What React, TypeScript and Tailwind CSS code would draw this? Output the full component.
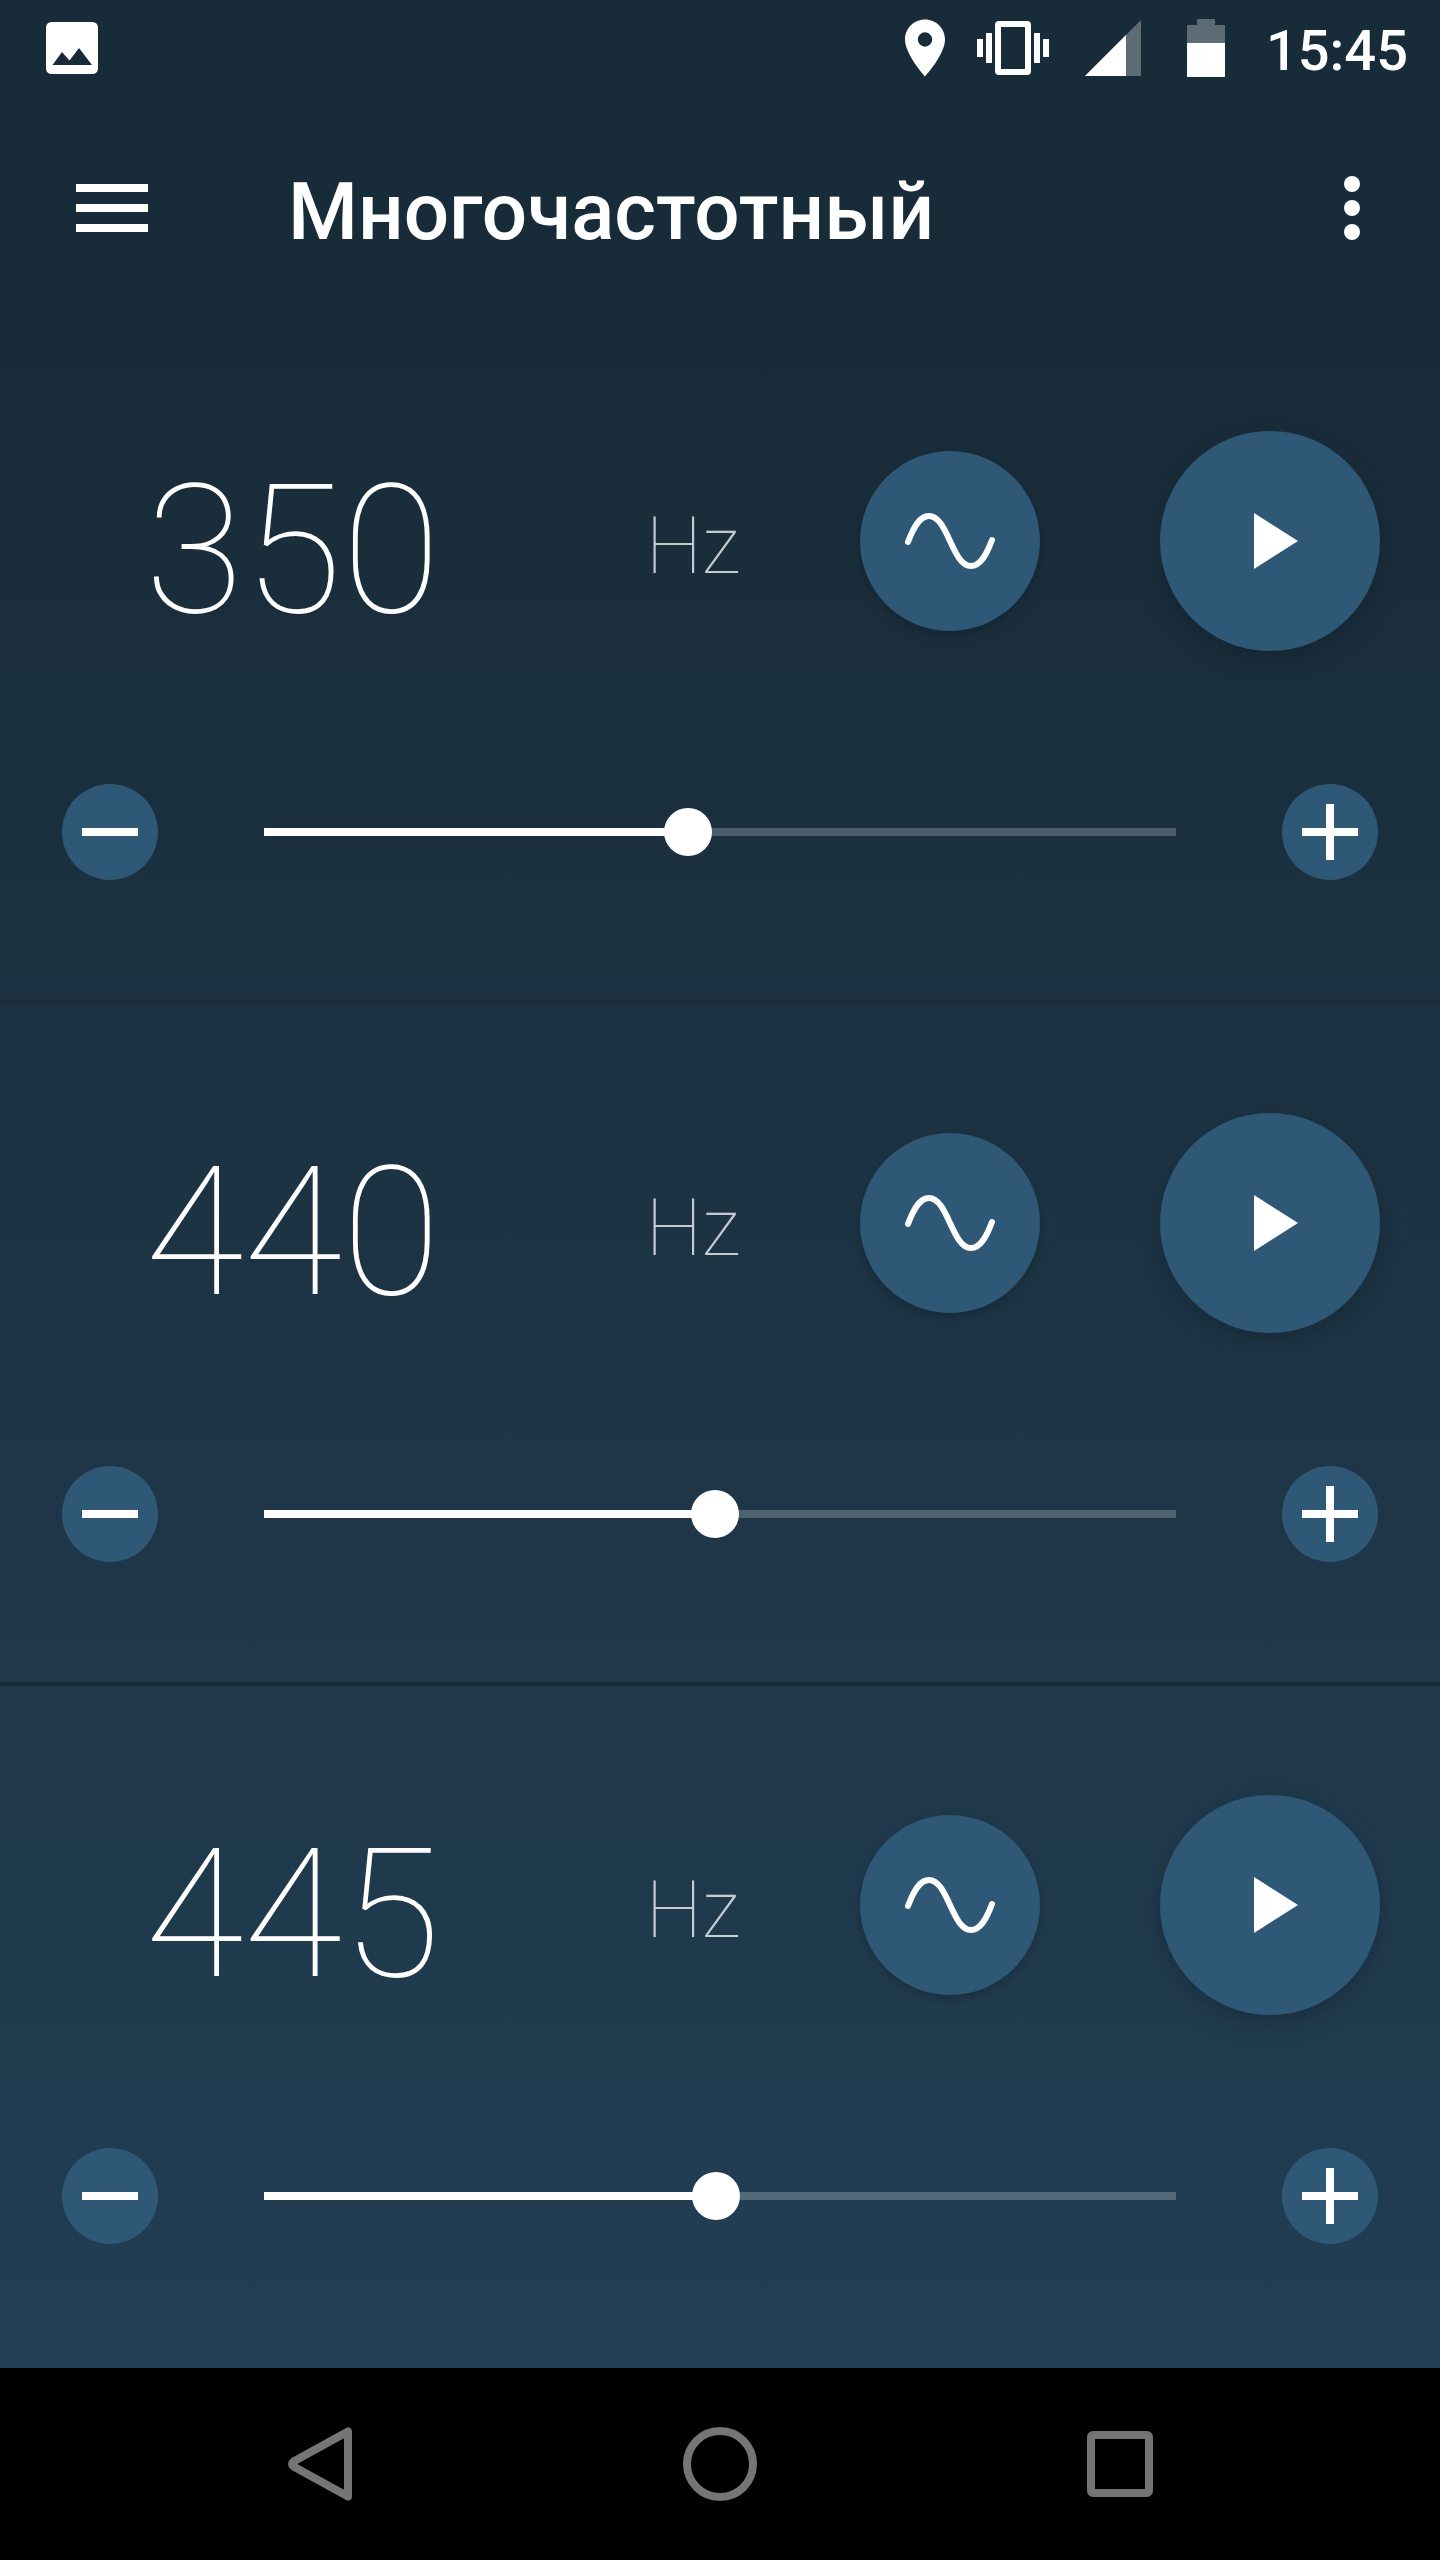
import { useState } from 'react'

interface Tone {
    id: string
    frequency: number
    position: number
}

const TONES: Tone[] = [
    { id: 'tone-1', frequency: 350, position: 463 },
    { id: 'tone-2', frequency: 440, position: 494 },
    { id: 'tone-3', frequency: 445, position: 495 },
]

const ROUND_BTN = 'flex shrink-0 items-center justify-center rounded-full bg-[#2f5877] text-white'

const StatusBar = () => (
    <div className="flex h-24 items-center pl-11 pr-8">
        <svg viewBox="0 0 56 56" className="size-14" fill="currentColor">
            <path fillRule="evenodd" d="M7.500 2h41a5.500 5.500 0 0 1 5.500 5.500v41a5.500 5.500 0 0 1-5.500 5.500h-41a5.500 5.500 0 0 1-5.500-5.500v-41a5.500 5.500 0 0 1 5.500-5.500zM8.500 45h39.500L35 28 25.500 40.500 18 32z" />
        </svg>

        <div className="ml-auto flex items-center">
            <svg viewBox="0 0 40 58" className="h-[58px] w-10" fill="currentColor">
                <path fillRule="evenodd" d="M20 .5C9 .5 0 9.300 0 20.500 0 35.500 20 57.500 20 57.500s20-22 20-37C40 9.300 31 .5 20 .5zm0 27.200a7.200 7.200 0 1 1 0-14.400 7.200 7.200 0 0 1 0 14.400z" />
            </svg>
            <svg viewBox="0 0 72 54" className="ml-8 h-[54px] w-[72px]" fill="currentColor">
                <path d="M0 18h6v18H0zM9 12h6v30H9zM57 12h6v30h-6zM66 18h6v18h-6z" />
                <path fillRule="evenodd" d="M22 0h28a4 4 0 0 1 4 4v46a4 4 0 0 1-4 4H22a4 4 0 0 1-4-4V4a4 4 0 0 1 4-4zm2 6v42h24V6z" />
            </svg>
            <svg viewBox="0 0 56 56" className="ml-9 size-14" fill="currentColor">
                <path d="M0 56 56 0v56z" opacity=".3" />
                <path d="M0 56 41 15v41z" />
            </svg>
            <svg viewBox="0 0 38 58" className="ml-[46px] h-[58px] w-[38px]" fill="currentColor">
                <path d="M10 0h18v6h10v18H0V6h10z" opacity=".3" />
                <path d="M0 24h38v34H0z" />
            </svg>
            <time className="ml-[41px] pt-1.5 text-[56px] leading-none font-medium">15:45</time>
        </div>
    </div>
)

const AppBar = () => (
    <header className="flex h-56 items-center px-16">
        <button type="button" aria-label="Меню" className="flex size-24 items-center justify-center">
            <svg viewBox="0 0 72 48" className="h-12 w-[72px]" fill="currentColor">
                <path d="M0 0h72v8H0zM0 20h72v8H0zM0 40h72v8H0z" />
            </svg>
        </button>
        <h1 className="ml-32 flex-1 pt-2 text-[80px] leading-none font-medium">Многочастотный</h1>
        <button type="button" aria-label="Ещё" className="flex h-24 w-12 items-center justify-center">
            <svg viewBox="0 0 16 64" className="h-16 w-4" fill="currentColor">
                <circle cx="8" cy="8" r="8" />
                <circle cx="8" cy="32" r="8" />
                <circle cx="8" cy="56" r="8" />
            </svg>
        </button>
    </header>
)

const ToneRow = ({ tone }: { tone: Tone }) => {
    const [position, setPosition] = useState(tone.position)
    const step = (delta: number) => setPosition(p => Math.min(1000, Math.max(0, p + delta)))
    // the fill ends under the thumb's centre, which travels 24px inside each end
    const fill = `calc(24px + (100% - 48px) * ${position / 1000})`

    return (
        <section className="flex-1 border-b-4 border-[#182b37] pt-[109px] pb-29 last:border-transparent">
            <div className="flex items-center px-15">
                <label htmlFor={tone.id} className="flex flex-1 items-center pl-[85px] font-thin">
                    <span className="flex-1 pt-5 text-[180px] leading-none">{tone.frequency}</span>
                    <span className="pt-2.5 text-[80px] leading-none text-white/75">Hz</span>
                </label>
                <button type="button" aria-label="Форма волны" className={`${ROUND_BTN} ml-30 size-45 shadow-[0_4px_12px_rgba(0,0,0,0.2)]`}>
                    <svg viewBox="0 0 90 56" className="h-14 w-[90px]" fill="none" stroke="currentColor" strokeWidth="6" strokeLinecap="round">
                        <path d="M3 29C9 13 15 3 24 3 43 3 47 53 66 53 75 53 81 43 87 27" />
                    </svg>
                </button>
                <button type="button" aria-label="Играть" className={`${ROUND_BTN} ml-30 size-55 shadow-[0_8px_24px_rgba(0,0,0,0.2)]`}>
                    <svg viewBox="0 0 56 56" className="size-14" fill="currentColor">
                        <path d="M12 0v56l44-28z" />
                    </svg>
                </button>
            </div>

            <div className="mt-[133px] flex items-center gap-[106px] px-[62px]">
                <button type="button" aria-label="Меньше" onClick={() => step(-1)} className={`${ROUND_BTN} size-24`}>
                    <svg viewBox="0 0 56 56" className="size-14" fill="currentColor">
                        <path d="M0 24h56v8H0z" />
                    </svg>
                </button>
                <input
                    id={tone.id}
                    type="range"
                    min={0}
                    max={1000}
                    value={position}
                    onChange={e => setPosition(Number(e.target.value))}
                    style={{ backgroundImage: `linear-gradient(to right, #fff ${fill}, rgba(255,255,255,0.22) ${fill})` }}
                    className="h-2 min-w-0 flex-1 cursor-pointer appearance-none bg-transparent [&::-webkit-slider-thumb]:size-12 [&::-webkit-slider-thumb]:appearance-none [&::-webkit-slider-thumb]:rounded-full [&::-webkit-slider-thumb]:bg-white"
                />
                <button type="button" aria-label="Больше" onClick={() => step(1)} className={`${ROUND_BTN} size-24`}>
                    <svg viewBox="0 0 56 56" className="size-14" fill="currentColor">
                        <path d="M24 0h8v24h24v8H32v24h-8V32H0v-8h24z" />
                    </svg>
                </button>
            </div>
        </section>
    )
}

const NavBar = () => (
    <nav className="flex h-48 items-center justify-center gap-80 bg-black text-[#757575]">
        <button type="button" aria-label="Назад" className="size-20">
            <svg viewBox="0 0 80 80" className="size-20" fill="none" stroke="currentColor" strokeWidth="8" strokeLinejoin="round">
                <path d="M68 7.500v65L13.500 42.500q-3-2.500 0-5z" />
            </svg>
        </button>
        <button type="button" aria-label="Домой" className="size-20">
            <svg viewBox="0 0 80 80" className="size-20" fill="none" stroke="currentColor" strokeWidth="8">
                <circle cx="40" cy="40" r="33" />
            </svg>
        </button>
        <button type="button" aria-label="Недавние" className="size-20">
            <svg viewBox="0 0 80 80" className="size-20" fill="currentColor">
                <path fillRule="evenodd" d="M13 7h54a6 6 0 0 1 6 6v54a6 6 0 0 1-6 6H13a6 6 0 0 1-6-6V13a6 6 0 0 1 6-6zm2 8v50h50V15z" />
            </svg>
        </button>
    </nav>
)

export default function App() {
    return (
        <div className="flex min-h-screen flex-col bg-black font-['Roboto',sans-serif] text-white">
            <div className="flex flex-1 flex-col bg-linear-to-b from-[#182b38] from-13% to-[#223e53]">
                <StatusBar />
                <AppBar />
                <main className="flex flex-1 flex-col pt-0.5">
                    {TONES.map(tone => <ToneRow key={tone.id} tone={tone} />)}
                </main>
            </div>
            <NavBar />
        </div>
    )
}
